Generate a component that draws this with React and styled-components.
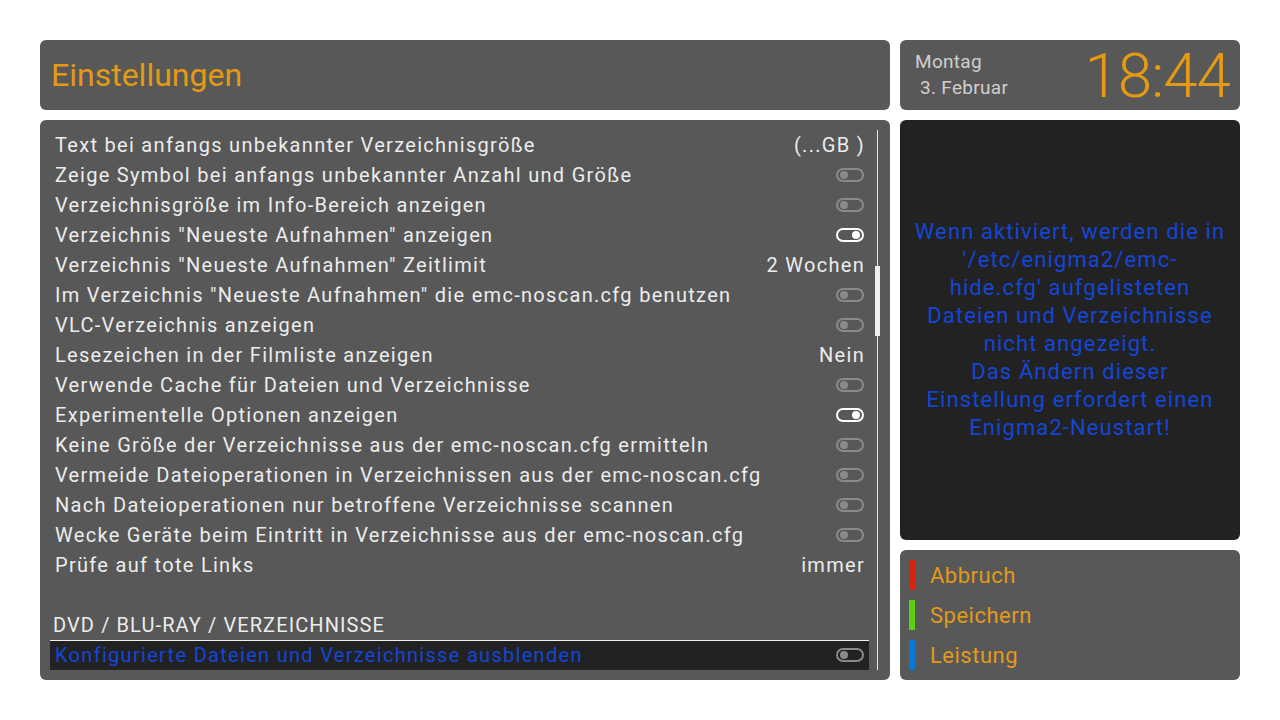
import React from 'react';
import styled, { createGlobalStyle } from 'styled-components';

const Global = createGlobalStyle`
  html, body { margin: 0; padding: 0; background: #ffffff; }
  body { font-family: Roboto, "Noto Sans", sans-serif; }
`;

const Screen = styled.div`
  width: 1280px;
  height: 720px;
  box-sizing: border-box;
  padding: 40px;
  display: grid;
  grid-template-columns: 850px 340px;
  grid-template-rows: 70px 420px 130px;
  gap: 10px;
`;

const Panel = styled.div`
  background: ${p => (p.$dark ? '#222222' : '#585858')};
  border-radius: 6px;
  box-sizing: border-box;
`;

const Header = styled(Panel)`
  display: flex;
  align-items: center;
  padding-left: 11px;
  h1 {
    margin: 0;
    font-weight: 400;
    font-size: 32px;
    color: #e59a14;
  }
`;

const Clock = styled(Panel)`
  display: flex;
  justify-content: space-between;
  align-items: center;
  padding: 0 10px 0 15px;
`;

const DateBox = styled.div`
  color: #cfcfcf;
  font-size: 19px;
  line-height: 26px;
  letter-spacing: 0.3px;
  span { display: block; }
  span + span { padding-left: 5px; }
`;

const Time = styled.div`
  color: #e59a14;
  font-size: 62px;
  font-weight: 300;
  line-height: 1;
  letter-spacing: -1px;
  margin-top: 2px;
`;

const ListPanel = styled(Panel)`
  grid-row: span 2;
  padding: 10px 10px 0 10px;
  display: flex;
  gap: 6px;
`;

const List = styled.div`
  flex: 1;
  display: flex;
  flex-direction: column;
`;

const Row = styled.div`
  height: 30px;
  display: flex;
  align-items: center;
  justify-content: space-between;
  padding: 0 4px 1px 5px;
  box-sizing: border-box;
  font-size: 20px;
  letter-spacing: 1.3px;
  color: ${p => (p.$selected ? '#1446d6' : '#ececec')};
  background: ${p => (p.$selected ? '#222222' : 'transparent')};
  box-shadow: ${p => (p.$selected ? 'inset 0 1px 0 #f0f0f0' : 'none')};
  white-space: nowrap;
`;

const Section = styled(Row)`
  padding-left: 3px;
  margin-top: 30px;
  color: #ececec;
  letter-spacing: 1.1px;
`;

const Track = styled.div`
  width: 5px;
  height: 540px;
  position: relative;
  display: flex;
  justify-content: center;
  &::before {
    content: '';
    width: 1px;
    height: 100%;
    background: #e6e6e6;
  }
`;

const Thumb = styled.div`
  position: absolute;
  left: 0;
  top: 136px;
  width: 5px;
  height: 70px;
  background: #eeeeee;
`;

const ToggleBox = styled.span`
  display: inline-flex;
  align-items: center;
  justify-content: ${p => (p.$on ? 'flex-end' : 'flex-start')};
  width: 28px;
  height: 14px;
  margin-right: 1px;
  box-sizing: border-box;
  border: 2px solid ${p => (p.$on ? '#ffffff' : '#8a8a8a')};
  border-radius: 8px;
  padding: 0 2px;
  &::after {
    content: '';
    width: 8px;
    height: 8px;
    border-radius: 50%;
    background: ${p => (p.$on ? '#ffffff' : '#8a8a8a')};
  }
`;

const Info = styled(Panel)`
  display: flex;
  flex-direction: column;
  align-items: center;
  justify-content: center;
  color: #1446d6;
  font-size: 22px;
  line-height: 28px;
  letter-spacing: 1.1px;
  text-align: center;
`;

const Buttons = styled(Panel)`
  padding: 10px 0 0 9px;
  display: flex;
  flex-direction: column;
  gap: 10px;
`;

const Key = styled.div`
  display: flex;
  align-items: center;
  gap: 15px;
  height: 30px;
  font-size: 22px;
  letter-spacing: 0.5px;
  color: #e29a1a;
  &::before {
    content: '';
    width: 6px;
    height: 30px;
    background: ${p => p.$color};
  }
`;

const rows = [
  ['Text bei anfangs unbekannter Verzeichnisgröße', '(...GB )'],
  ['Zeige Symbol bei anfangs unbekannter Anzahl und Größe', false],
  ['Verzeichnisgröße im Info-Bereich anzeigen', false],
  ['Verzeichnis "Neueste Aufnahmen" anzeigen', true],
  ['Verzeichnis "Neueste Aufnahmen" Zeitlimit', '2 Wochen'],
  ['Im Verzeichnis "Neueste Aufnahmen" die emc-noscan.cfg benutzen', false],
  ['VLC-Verzeichnis anzeigen', false],
  ['Lesezeichen in der Filmliste anzeigen', 'Nein'],
  ['Verwende Cache für Dateien und Verzeichnisse', false],
  ['Experimentelle Optionen anzeigen', true],
  ['Keine Größe der Verzeichnisse aus der emc-noscan.cfg ermitteln', false],
  ['Vermeide Dateioperationen in Verzeichnissen aus der emc-noscan.cfg', false],
  ['Nach Dateioperationen nur betroffene Verzeichnisse scannen', false],
  ['Wecke Geräte beim Eintritt in Verzeichnisse aus der emc-noscan.cfg', false],
  ['Prüfe auf tote Links', 'immer'],
];

const infoLines = [
  'Wenn aktiviert, werden die in',
  "'/etc/enigma2/emc-",
  "hide.cfg' aufgelisteten",
  'Dateien und Verzeichnisse',
  'nicht angezeigt.',
  'Das Ändern dieser',
  'Einstellung erfordert einen',
  'Enigma2-Neustart!',
];

function Value({ v }) {
  if (typeof v === 'boolean') return <ToggleBox $on={v} />;
  return <span>{v}</span>;
}

export default function App() {
  return (
    <>
      <Global />
      <Screen>
        <Header><h1>Einstellungen</h1></Header>
        <Clock>
          <DateBox>
            <span>Montag</span>
            <span>3. Februar</span>
          </DateBox>
          <Time>18:44</Time>
        </Clock>
        <ListPanel>
          <List>
            {rows.map(([label, v]) => (
              <Row key={label}>
                <span>{label}</span>
                <Value v={v} />
              </Row>
            ))}
            <Section>DVD / BLU-RAY / VERZEICHNISSE</Section>
            <Row $selected>
              <span>Konfigurierte Dateien und Verzeichnisse ausblenden</span>
              <ToggleBox $on={false} />
            </Row>
          </List>
          <Track><Thumb /></Track>
        </ListPanel>
        <Info $dark>
          {infoLines.map(l => <span key={l}>{l}</span>)}
        </Info>
        <Buttons>
          <Key $color="#d42410">Abbruch</Key>
          <Key $color="#5cd012">Speichern</Key>
          <Key $color="#0a78d6">Leistung</Key>
        </Buttons>
      </Screen>
    </>
  );
}
